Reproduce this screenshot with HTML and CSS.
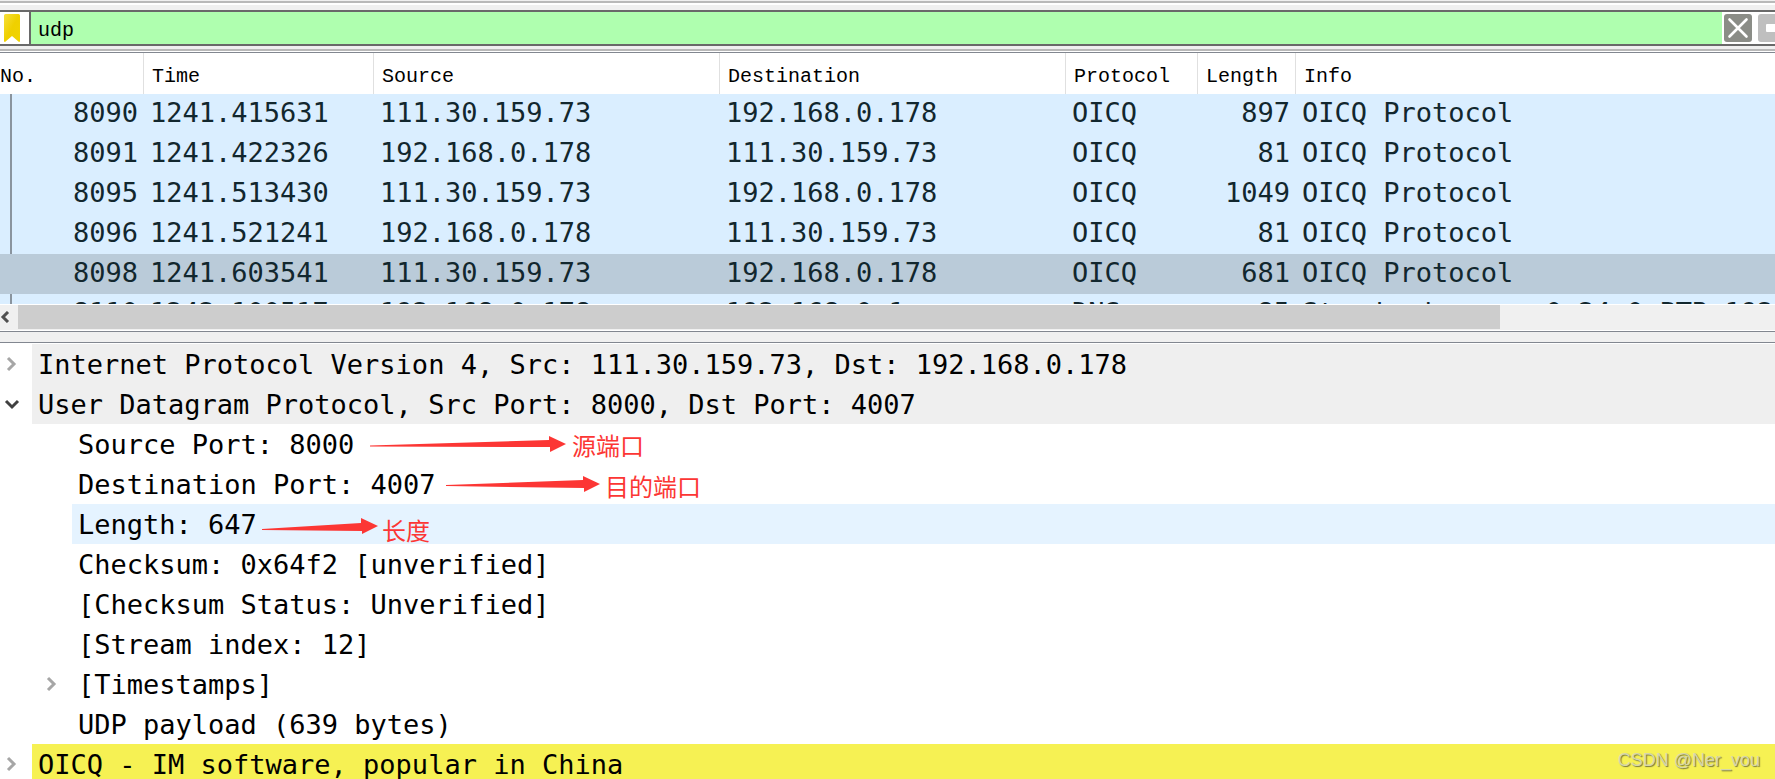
FILE: index.html
```
<!DOCTYPE html>
<html lang="en">
<head>
    <meta charset="utf-8">
    <title>udp</title>
    <link rel="stylesheet" href="styles.css">
</head>
<body>
    <form class="filter-bar">
        <button type="button" class="bookmark" aria-label="Bookmarks">
            <svg width="16" height="28" viewBox="0 0 16 28">
                <defs>
                    <linearGradient id="gold" x1="0" y1="0" x2="1" y2="1">
                        <stop offset="0" stop-color="#f6de3a"/>
                        <stop offset="0.5" stop-color="#efd000"/>
                        <stop offset="1" stop-color="#f0d400"/>
                    </linearGradient>
                </defs>
                <path d="M0 1.5Q0 0 1.5 0H14.5Q16 0 16 1.5V27Q16 28 15 28L8 22L1 28Q0 28 0 27Z" fill="url(#gold)"/>
            </svg>
        </button>
        <input type="text" class="filter-input" value="udp" aria-label="Display filter">
        <button type="button" class="icon-button" aria-label="Clear">
            <svg width="28" height="28" viewBox="0 0 28 28">
                <rect width="28" height="28" rx="3" fill="#8b8d87"/>
                <path d="M5.500 5.500L22.500 22.500M22.500 5.500L5.500 22.500" stroke="#fff" stroke-width="2.600" stroke-linecap="round"/>
            </svg>
        </button>
        <button type="button" class="icon-button apply" aria-label="Apply">
            <svg width="28" height="28" viewBox="0 0 28 28">
                <rect width="28" height="28" rx="3" fill="#bfbfbf"/>
                <path d="M9 10H17V5L26 14L17 23V18H9Q8 18 8 17V11Q8 10 9 10Z" fill="#fff"/>
            </svg>
        </button>
    </form>

    <div class="packet-list">
        <table>
            <thead>
                <tr>
                    <th class="no">No.</th>
                    <th class="time">Time</th>
                    <th class="address">Source</th>
                    <th class="address">Destination</th>
                    <th class="protocol">Protocol</th>
                    <th class="length">Length</th>
                    <th>Info</th>
                </tr>
            </thead>
            <tbody>
                <tr><td class="num">8090</td><td>1241.415631</td><td>111.30.159.73</td><td>192.168.0.178</td><td>OICQ</td><td class="num">897</td><td>OICQ Protocol</td></tr>
                <tr><td class="num">8091</td><td>1241.422326</td><td>192.168.0.178</td><td>111.30.159.73</td><td>OICQ</td><td class="num">81</td><td>OICQ Protocol</td></tr>
                <tr><td class="num">8095</td><td>1241.513430</td><td>111.30.159.73</td><td>192.168.0.178</td><td>OICQ</td><td class="num">1049</td><td>OICQ Protocol</td></tr>
                <tr><td class="num">8096</td><td>1241.521241</td><td>192.168.0.178</td><td>111.30.159.73</td><td>OICQ</td><td class="num">81</td><td>OICQ Protocol</td></tr>
                <tr class="selected"><td class="num">8098</td><td>1241.603541</td><td>111.30.159.73</td><td>192.168.0.178</td><td>OICQ</td><td class="num">681</td><td>OICQ Protocol</td></tr>
                <tr><td class="num">8110</td><td>1242.100517</td><td>192.168.0.178</td><td>192.168.0.1</td><td>DNS</td><td class="num">85</td><td>Standard query 0x24c0 PTR 192.168</td></tr>
            </tbody>
        </table>
    </div>

    <div class="scrollbar">
        <button type="button" class="scroll-left" aria-label="Scroll left">
            <svg width="10" height="12" viewBox="0 0 10 12"><path d="M8 1L3 6L8 11" fill="none" stroke="#505050" stroke-width="3"/></svg>
        </button>
        <div class="thumb"></div>
    </div>
    <div class="splitter"></div>

    <ul class="details">
        <li>
            <svg class="arrow" viewBox="0 0 16 16"><path d="M4 2L10 8L4 14" stroke="#a6a6a6"/></svg>
            <span class="heading">Internet Protocol Version 4, Src: 111.30.159.73, Dst: 192.168.0.178</span>
        </li>
        <li>
            <svg class="arrow" viewBox="0 0 16 16"><path d="M2 5L8 11L14 5" stroke="#404040"/></svg>
            <span class="heading">User Datagram Protocol, Src Port: 8000, Dst Port: 4007</span>
        </li>
        <li class="child"><span>Source Port: 8000</span></li>
        <li class="child"><span>Destination Port: 4007</span></li>
        <li class="child"><span class="hover">Length: 647</span></li>
        <li class="child"><span>Checksum: 0x64f2 [unverified]</span></li>
        <li class="child"><span>[Checksum Status: Unverified]</span></li>
        <li class="child"><span>[Stream index: 12]</span></li>
        <li class="child">
            <svg class="arrow" viewBox="0 0 16 16"><path d="M4 2L10 8L4 14" stroke="#a6a6a6"/></svg>
            <span>[Timestamps]</span>
        </li>
        <li class="child"><span>UDP payload (639 bytes)</span></li>
        <li>
            <svg class="arrow" viewBox="0 0 16 16"><path d="M4 2L10 8L4 14" stroke="#a6a6a6"/></svg>
            <span class="oicq">OICQ - IM software, popular in China</span>
        </li>
    </ul>

    <!-- red notes over the port and length fields -->
    <svg class="notes" width="720" height="130" viewBox="0 424 720 130">
        <path d="M370 445.500L549 440V436L566 444L550 452V447L370 446.500Z"/>
        <path d="M446 485L583 480V476L600 484L584 492V488L446 486Z"/>
        <path d="M262 529L361 523V518L378 526L362 534V531L262 530Z"/>
        <text x="572" y="455">源端口</text>
        <text x="605" y="496">目的端口</text>
        <text x="382" y="540">长度</text>
    </svg>

    <div class="watermark">CSDN @Ner_vou</div>
</body>
</html>
```
FILE: styles.css
```
* {
    box-sizing: border-box;
}

body {
    display: flow-root;
    position: relative;
    margin: 0;
    height: 100vh;
    overflow: hidden;
    background: linear-gradient(#f0f0f0 1px, #b9b9b9 1px, #b9b9b9 3px, #fff 3px, #fff 5px, #f0f0f0 5px, #f0f0f0 49px, #fff 49px);
    color: #000;
    font-family: "DejaVu Sans Mono", monospace;
    font-size: 27px;
}

button {
    padding: 0;
    border: none;
    background: none;
}

svg {
    display: block;
}

/* Filter bar */
.filter-bar {
    display: flex;
    align-items: center;
    height: 36px;
    margin: 10px 0 3px;
    border-top: 2px solid #696969;
    border-bottom: 2px solid #696969;
    background-color: #fff;
}

.bookmark {
    width: 29px;
    padding-left: 4px;
}

.filter-input {
    flex: 1;
    min-width: 0;
    height: 32px;
    padding: 4px 7px 0;
    border: none;
    border-left: 2px solid #696969;
    outline: none;
    background-color: #afffaf;
    font-family: "Liberation Mono", monospace;
    font-size: 20px;
}

.icon-button {
    width: 28px;
    margin-left: 2px;
}

.apply {
    width: 17px;
    margin-left: 6px;
    overflow: hidden;
}

/* Packet list */
.packet-list {
    height: 255px;
    overflow: hidden;
    border-top: 2px solid #b9b9b9;
    background-color: #fff;
}

table {
    width: 100%;
    table-layout: fixed;
    border-collapse: separate;
    border-spacing: 0;
    border-top: 1px solid #828790;
    margin-top: 1px;
}

th {
    height: 41px;
    padding: 6px 8px 0;
    border-right: 1px solid #e0e0e0;
    text-align: left;
    font-family: "Liberation Mono", monospace;
    font-size: 20px;
    font-weight: normal;
}

th:last-child {
    border-right: none;
}

.no {
    width: 144px;
    padding-left: 0;
}

.time {
    width: 230px;
}

.address {
    width: 346px;
}

.protocol {
    width: 132px;
}

.length {
    width: 98px;
}

td {
    height: 40px;
    padding: 0 6px 2px;
    line-height: 38px;
    white-space: nowrap;
    overflow: hidden;
    color: #12272e;
}

.num {
    text-align: right;
}

tbody tr {
    background-color: #daeeff;
}

tbody .selected {
    background-color: #bacbd9;
}

/* vertical line joining the packets of one conversation */
tbody td:first-child {
    background: linear-gradient(#8a949e, #8a949e) 10px 0 / 2px 100% no-repeat;
}

tbody .selected td:first-child {
    background: none;
}

/* Scrollbar */
.scrollbar {
    display: flex;
    height: 27px;
    padding-bottom: 1px;
    border-top: 1px solid #fff;
    border-bottom: 1px solid #fff;
    background-color: #f0f0f0;
}

.scroll-left {
    width: 18px;
}

.thumb {
    width: 1482px;
    max-width: 84%;
    background-color: #cdcdcd;
}

.splitter {
    height: 12px;
    border-top: 1px solid #828790;
    border-bottom: 1px solid #828790;
    background-color: #f0f0f0;
}

/* Packet details */
.details {
    margin: 0;
    padding: 1px 0 0;
    list-style: none;
}

.details li {
    display: flex;
    align-items: center;
    height: 40px;
    line-height: 38px;
    white-space: nowrap;
}

.details .child {
    padding-left: 40px;
}

.details span {
    flex: 1;
    margin-left: 32px;
    padding: 2px 0 0 6px;
}

.arrow {
    width: 16px;
    height: 16px;
    margin: 0 12px 0 4px;
    fill: none;
    stroke-width: 3;
}

.details .arrow + span {
    margin-left: 0;
}

.details .heading {
    background-color: #efefef;
}

.details .hover {
    background-color: #e5f3ff;
}

.details .oicq {
    background-color: #f6f153;
}

.notes {
    position: absolute;
    left: 0;
    top: 424px;
    fill: #fc3634;
    font-family: "Noto Sans CJK SC", sans-serif;
    font-size: 24px;
}

.watermark {
    position: absolute;
    right: 15px;
    bottom: 8px;
    color: #d6d6ac;
    font-family: "Liberation Sans", sans-serif;
    font-size: 18px;
    text-shadow: 1px 1px 1px #77773c;
}
```
